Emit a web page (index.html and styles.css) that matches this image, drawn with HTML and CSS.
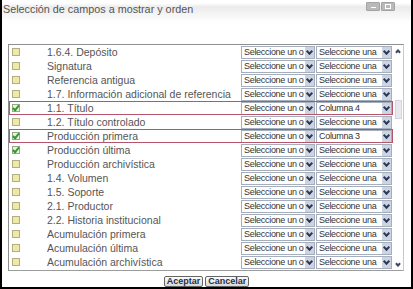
FILE: index.html
```html
<!DOCTYPE html>
<html lang="es">

<head>
    <meta charset="UTF-8">
    <meta name="viewport" content="width=device-width, initial-scale=1.0">
    <title>Selección de campos</title>
    <link rel="stylesheet" href="styles.css">
</head>

<body>
    <div class="window">
        <div class="titlebar">
            <span class="title">Selección de campos a mostrar y orden</span>
            <div class="winbtns">
                <span class="wb wb-min"></span>
                <span class="wb wb-max"></span>
            </div>
        </div>

        <div class="list">
            <div class="rows">
                <div class="row">
                    <span class="chk"></span>
                    <span class="label">1.6.4. Depósito</span>
                    <div class="sel s1"><span class="val">Seleccione un o</span><span class="arr"></span></div>
                    <div class="sel s2"><span class="val">Seleccione una</span><span class="arr"></span></div>
                </div>
                <div class="row">
                    <span class="chk"></span>
                    <span class="label">Signatura</span>
                    <div class="sel s1"><span class="val">Seleccione un o</span><span class="arr"></span></div>
                    <div class="sel s2"><span class="val">Seleccione una</span><span class="arr"></span></div>
                </div>
                <div class="row">
                    <span class="chk"></span>
                    <span class="label">Referencia antigua</span>
                    <div class="sel s1"><span class="val">Seleccione un o</span><span class="arr"></span></div>
                    <div class="sel s2"><span class="val">Seleccione una</span><span class="arr"></span></div>
                </div>
                <div class="row">
                    <span class="chk"></span>
                    <span class="label">1.7. Información adicional de referencia</span>
                    <div class="sel s1"><span class="val">Seleccione un o</span><span class="arr"></span></div>
                    <div class="sel s2"><span class="val">Seleccione una</span><span class="arr"></span></div>
                </div>
                <div class="row marked">
                    <span class="chk on"></span>
                    <span class="label">1.1. Título</span>
                    <div class="sel s1"><span class="val">Seleccione un o</span><span class="arr"></span></div>
                    <div class="sel s2"><span class="val">Columna 4</span><span class="arr"></span></div>
                </div>
                <div class="row">
                    <span class="chk"></span>
                    <span class="label">1.2. Título controlado</span>
                    <div class="sel s1"><span class="val">Seleccione un o</span><span class="arr"></span></div>
                    <div class="sel s2"><span class="val">Seleccione una</span><span class="arr"></span></div>
                </div>
                <div class="row marked">
                    <span class="chk on"></span>
                    <span class="label">Producción primera</span>
                    <div class="sel s1"><span class="val">Seleccione un o</span><span class="arr"></span></div>
                    <div class="sel s2"><span class="val">Columna 3</span><span class="arr"></span></div>
                </div>
                <div class="row">
                    <span class="chk on"></span>
                    <span class="label">Producción última</span>
                    <div class="sel s1"><span class="val">Seleccione un o</span><span class="arr"></span></div>
                    <div class="sel s2"><span class="val">Seleccione una</span><span class="arr"></span></div>
                </div>
                <div class="row">
                    <span class="chk"></span>
                    <span class="label">Producción archivística</span>
                    <div class="sel s1"><span class="val">Seleccione un o</span><span class="arr"></span></div>
                    <div class="sel s2"><span class="val">Seleccione una</span><span class="arr"></span></div>
                </div>
                <div class="row">
                    <span class="chk"></span>
                    <span class="label">1.4. Volumen</span>
                    <div class="sel s1"><span class="val">Seleccione un o</span><span class="arr"></span></div>
                    <div class="sel s2"><span class="val">Seleccione una</span><span class="arr"></span></div>
                </div>
                <div class="row">
                    <span class="chk"></span>
                    <span class="label">1.5. Soporte</span>
                    <div class="sel s1"><span class="val">Seleccione un o</span><span class="arr"></span></div>
                    <div class="sel s2"><span class="val">Seleccione una</span><span class="arr"></span></div>
                </div>
                <div class="row">
                    <span class="chk"></span>
                    <span class="label">2.1. Productor</span>
                    <div class="sel s1"><span class="val">Seleccione un o</span><span class="arr"></span></div>
                    <div class="sel s2"><span class="val">Seleccione una</span><span class="arr"></span></div>
                </div>
                <div class="row">
                    <span class="chk"></span>
                    <span class="label">2.2. Historia institucional</span>
                    <div class="sel s1"><span class="val">Seleccione un o</span><span class="arr"></span></div>
                    <div class="sel s2"><span class="val">Seleccione una</span><span class="arr"></span></div>
                </div>
                <div class="row">
                    <span class="chk"></span>
                    <span class="label">Acumulación primera</span>
                    <div class="sel s1"><span class="val">Seleccione un o</span><span class="arr"></span></div>
                    <div class="sel s2"><span class="val">Seleccione una</span><span class="arr"></span></div>
                </div>
                <div class="row">
                    <span class="chk"></span>
                    <span class="label">Acumulación última</span>
                    <div class="sel s1"><span class="val">Seleccione un o</span><span class="arr"></span></div>
                    <div class="sel s2"><span class="val">Seleccione una</span><span class="arr"></span></div>
                </div>
                <div class="row">
                    <span class="chk"></span>
                    <span class="label">Acumulación archivística</span>
                    <div class="sel s1"><span class="val">Seleccione un o</span><span class="arr"></span></div>
                    <div class="sel s2"><span class="val">Seleccione una</span><span class="arr"></span></div>
                </div>
                <div class="row">
                    <span class="chk"></span>
                    <span class="label"></span>
                    <div class="sel s1"><span class="val"></span><span class="arr"></span></div>
                    <div class="sel s2"><span class="val"></span><span class="arr"></span></div>
                </div>
            </div>
            <div class="scrollbar">
                <span class="sb-btn sb-up"></span>
                <span class="sb-thumb"></span>
                <span class="sb-btn sb-down"></span>
            </div>
        </div>

        <div class="actions">
            <button class="btn">Aceptar</button>
            <button class="btn">Cancelar</button>
        </div>
    </div>
</body>

</html>
```

FILE: styles.css
```css
body {
    margin: 0;
    padding: 0;
    background-color: #fff;
    font-family: "Liberation Sans", Arial, sans-serif;
}

.window {
    width: 413px;
    height: 289px;
    box-sizing: border-box;
    border-left: 2px solid #000;
    border-right: 2px solid #000;
    border-bottom: 2px solid #000;
    display: flex;
    flex-direction: column;
    overflow: hidden;
}

/* title bar */
.titlebar {
    height: 22px;
    display: flex;
    justify-content: space-between;
    align-items: flex-start;
    background: linear-gradient(to bottom, #fff 0, #fff 3px, #ebebeb 7px, #fff 22px);
}

.title {
    margin: 2px 0 0 1px;
    font-size: 10.8px;
    line-height: 14px;
    color: #555;
}

.winbtns {
    display: flex;
    gap: 1px;
    margin: 2px 16px 0 0;
}

.wb {
    width: 12px;
    height: 7px;
    background-color: #b9b9b9;
    border: 1px solid #a3a3a3;
    border-radius: 1px;
    position: relative;
}

.wb-min::after {
    content: "";
    position: absolute;
    left: 4px;
    top: 4px;
    width: 5px;
    height: 1px;
    background-color: #fff;
}

.wb-max::after {
    content: "";
    position: absolute;
    left: 3px;
    top: 1px;
    width: 4px;
    height: 3px;
    border: 1px solid #fff;
}

/* list */
.list {
    margin: 22px 7px 0 6px;
    height: 227px;
    box-sizing: border-box;
    display: flex;
    border-top: 1px solid #8f8f8f;
    border-left: 1px solid #8f8f8f;
    border-right: 1px solid #c9c9c9;
    border-bottom: 1px solid #9c9c9c;
    overflow: hidden;
}

.rows {
    width: 384px;
    overflow: hidden;
}

.row {
    height: 14px;
    display: flex;
    align-items: center;
}

.row.marked {
    outline: 1px solid #b5566a;
    outline-offset: -1px;
}

.chk {
    width: 6px;
    height: 6px;
    margin-left: 3px;
    border: 1px solid #b3ae82;
    background-color: #efe9a8;
    position: relative;
    flex-shrink: 0;
}

.chk.on {
    background-color: #e8f3dc;
    border-color: #9aa58a;
}

.chk.on::after {
    content: "";
    position: absolute;
    left: 1px;
    top: -1px;
    width: 2px;
    height: 5px;
    border-right: 2px solid #2f9b2f;
    border-bottom: 2px solid #2f9b2f;
    transform: rotate(40deg);
}

.label {
    width: 194px;
    margin-left: 27px;
    font-size: 10.5px;
    color: #555;
    white-space: nowrap;
    overflow: hidden;
    flex-shrink: 0;
}

.sel {
    height: 13px;
    box-sizing: border-box;
    border: 1px solid #a5aebd;
    display: flex;
    align-items: center;
    background-color: #fff;
    flex-shrink: 0;
}

.s1 {
    width: 74px;
    margin-right: 1px;
}

.s2 {
    width: 76px;
}

.val {
    flex: 1;
    padding-left: 2px;
    font-size: 9px;
    letter-spacing: -0.3px;
    color: #333;
    white-space: nowrap;
    overflow: hidden;
}

.arr {
    width: 9px;
    height: 11px;
    background-color: #cdd4df;
    position: relative;
    flex-shrink: 0;
}

.arr::after {
    content: "";
    position: absolute;
    left: 2px;
    top: 2px;
    width: 3px;
    height: 3px;
    border-right: 2px solid #2b3a5c;
    border-bottom: 2px solid #2b3a5c;
    transform: rotate(45deg);
}

/* scrollbar */
.scrollbar {
    width: 10px;
    background-color: #fff;
    display: flex;
    flex-direction: column;
    align-items: center;
    position: relative;
}

.sb-btn {
    width: 8px;
    height: 8px;
    position: relative;
}

.sb-up {
    margin-top: 2px;
}

.sb-down {
    margin-top: auto;
    margin-bottom: 1px;
}

.sb-up::after,
.sb-down::after {
    content: "";
    position: absolute;
    left: 2px;
    width: 2px;
    height: 2px;
    border-right: 2px solid #3a4764;
    border-bottom: 2px solid #3a4764;
}

.sb-up::after {
    top: 3px;
    transform: rotate(-135deg);
}

.sb-down::after {
    top: 1px;
    transform: rotate(45deg);
}

.sb-thumb {
    width: 7px;
    height: 19px;
    margin-top: 45px;
    background-color: #e7e9ee;
    border: 1px solid #d2d6de;
    box-sizing: border-box;
}

/* buttons */
.actions {
    display: flex;
    justify-content: center;
    gap: 2px;
    margin-top: 5px;
}

.btn {
    height: 11px;
    padding: 0 2px;
    font-family: "Liberation Sans", Arial, sans-serif;
    font-size: 9px;
    font-weight: bold;
    line-height: 9px;
    color: #1f2d4d;
    background: linear-gradient(to bottom, #fdfdfd, #d8d8d8);
    border: 1px solid #666;
    border-radius: 2px;
}
```
